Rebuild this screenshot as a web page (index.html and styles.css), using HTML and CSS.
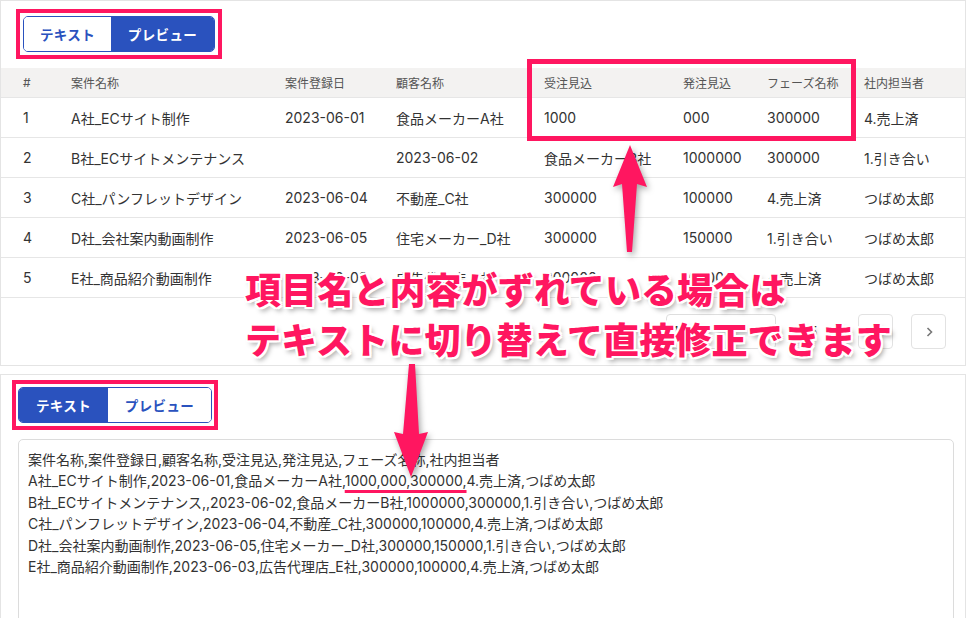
FILE: index.html
```html
<!DOCTYPE html>
<html lang="ja">
<head>
<meta charset="utf-8">
<title>CSV preview</title>
<link rel="stylesheet" href="styles.css">
</head>
<body>
<div class="page">
  <section class="panel top">
    <div class="hl">
      <div class="seg">
        <span class="seg-item">テキスト</span>
        <span class="seg-item on">プレビュー</span>
      </div>
    </div>
    <div class="grid">
      <div class="row head">
        <span>#</span><span>案件名称</span><span>案件登録日</span><span>顧客名称</span><span>受注見込</span><span>発注見込</span><span>フェーズ名称</span><span>社内担当者</span>
      </div>
      <div class="row">
        <span>1</span><span>A社_ECサイト制作</span><span>2023-06-01</span><span>食品メーカーA社</span><span>1000</span><span>000</span><span>300000</span><span>4.売上済</span>
      </div>
      <div class="row">
        <span>2</span><span>B社_ECサイトメンテナンス</span><span></span><span>2023-06-02</span><span>食品メーカーB社</span><span>1000000</span><span>300000</span><span>1.引き合い</span>
      </div>
      <div class="row">
        <span>3</span><span>C社_パンフレットデザイン</span><span>2023-06-04</span><span>不動産_C社</span><span>300000</span><span>100000</span><span>4.売上済</span><span>つばめ太郎</span>
      </div>
      <div class="row">
        <span>4</span><span>D社_会社案内動画制作</span><span>2023-06-05</span><span>住宅メーカー_D社</span><span>300000</span><span>150000</span><span>1.引き合い</span><span>つばめ太郎</span>
      </div>
      <div class="row">
        <span>5</span><span>E社_商品紹介動画制作</span><span>2023-06-03</span><span>広告代理店_E社</span><span>300000</span><span>100000</span><span>4.売上済</span><span>つばめ太郎</span>
      </div>
    </div>
    <div class="pager">
      <span class="pg-select">1</span>
      <span class="pg-text">/ 5</span>
      <span class="pg-btn"><svg width="10" height="12" viewBox="0 0 10 12"><polyline points="6.5,2 2.5,6 6.5,10" fill="none" stroke="#c8c8c8" stroke-width="1.6"/></svg></span>
      <span class="pg-btn"><svg width="10" height="12" viewBox="0 0 10 12"><polyline points="3.5,2 7.5,6 3.5,10" fill="none" stroke="#777" stroke-width="1.6"/></svg></span>
    </div>
  </section>

  <section class="panel bottom">
    <div class="hl hl2">
      <div class="seg seg2">
        <span class="seg-item on">テキスト</span>
        <span class="seg-item">プレビュー</span>
      </div>
    </div>
    <div class="editor">案件名称,案件登録日,顧客名称,受注見込,発注見込,フェーズ名称,社内担当者
A社_ECサイト制作,2023-06-01,食品メーカーA社,<span class="mark">1000,000,300000,</span>4.売上済,つばめ太郎
B社_ECサイトメンテナンス,,2023-06-02,食品メーカーB社,1000000,300000,1.引き合い,つばめ太郎
C社_パンフレットデザイン,2023-06-04,不動産_C社,300000,100000,4.売上済,つばめ太郎
D社_会社案内動画制作,2023-06-05,住宅メーカー_D社,300000,150000,1.引き合い,つばめ太郎
E社_商品紹介動画制作,2023-06-03,広告代理店_E社,300000,100000,4.売上済,つばめ太郎</div>
  </section>

  <div class="hl-box"></div>
  <svg class="arrows" width="969" height="618" viewBox="0 0 969 618">
    <polygon points="630,145 647,187 637,184 632,252 627,252 622,184 613,187" fill="#ff1660"/>
    <polygon points="409,364 415,364 419,434 428,432 411,477 394,432 403,434" fill="#ff1660"/>
  </svg>
  <div class="note">
    <div>項目名と内容がずれている場合は</div>
    <div>テキストに切り替えて直接修正できます</div>
  </div>
</div>
</body>
</html>
```
FILE: styles.css
```css
html, body {
  margin: 0;
  padding: 0;
  background: #ffffff;
}
body {
  font-family: Inter, "Noto Sans CJK JP", sans-serif;
  color: #333333;
  width: 969px;
  height: 618px;
  overflow: hidden;
}
.page {
  position: relative;
  width: 969px;
  height: 618px;
}
.panel {
  box-sizing: border-box;
  width: 966px;
  border: 1px solid #e4e4e4;
  background: #ffffff;
}
.top {
  padding-top: 8px;
}
.bottom {
  margin-top: 8px;
  padding: 5px 0 0 11px;
  height: 260px;
}
.hl {
  display: inline-flex;
  margin-left: 15px;
  border: 4px solid #ff1660;
  padding: 3px;
}
.hl2 {
  margin-left: 0;
  padding: 3px 2px;
}
.seg {
  display: flex;
  height: 36px;
  box-sizing: border-box;
  border: 1px solid #2a52be;
  border-radius: 5px;
  overflow: hidden;
}
.seg-item {
  display: flex;
  align-items: center;
  justify-content: center;
  width: 87px;
  font-size: 13.5px;
  font-weight: 700;
  letter-spacing: 0.4px;
  color: #2a52be;
  background: #ffffff;
}
.seg-item + .seg-item {
  width: 103px;
}
.seg2 .seg-item {
  width: 89px;
}
.seg2 .seg-item + .seg-item {
  width: 103px;
}
.seg-item.on {
  background: #2a52be;
  color: #ffffff;
}
.grid {
  margin-top: 9px;
}
.row {
  display: grid;
  grid-template-columns: 70px 214px 111px 148px 139px 84px 97px 1fr;
  align-items: center;
  height: 40px;
  box-sizing: border-box;
  border-bottom: 1px solid #e6e6e6;
  font-size: 14px;
  color: #333333;
  white-space: nowrap;
}
.row > span:first-child {
  padding-left: 22px;
}
.row.head {
  height: 30px;
  background: #f3f2f1;
  font-size: 12px;
  color: #555555;
}
.pager {
  display: flex;
  justify-content: flex-end;
  align-items: center;
  height: 67px;
  padding-right: 19px;
  font-size: 14px;
  color: #333333;
}
.pg-select {
  box-sizing: border-box;
  width: 110px;
  height: 35px;
  border: 1px solid #dedede;
  border-radius: 4px;
  display: flex;
  align-items: center;
  padding-left: 6px;
}
.pg-text {
  margin-left: 24px;
  width: 40px;
}
.pg-btn {
  box-sizing: border-box;
  width: 35px;
  height: 35px;
  border: 1px solid #e2e2e2;
  border-radius: 4px;
  display: flex;
  align-items: center;
  justify-content: center;
  margin-left: 18px;
}
.editor {
  margin-top: 9px;
  margin-left: 6px;
  box-sizing: border-box;
  width: 936px;
  height: 200px;
  border: 1px solid #dcdcdc;
  border-radius: 5px;
  padding: 9px 9px;
  font-size: 14px;
  line-height: 21.4px;
  color: #333333;
  white-space: pre;
}
.mark {
  text-decoration: underline;
  text-decoration-color: #ff1660;
  text-decoration-thickness: 3px;
  text-underline-offset: 4px;
}
.hl-box {
  position: absolute;
  left: 527px;
  top: 59px;
  width: 329px;
  height: 82px;
  box-sizing: border-box;
  border: 5px solid #ff1660;
}
.arrows {
  position: absolute;
  left: 0;
  top: 0;
  filter: drop-shadow(2px 3px 3px rgba(0, 0, 0, 0.35));
}
.note {
  position: absolute;
  left: 245px;
  top: 263px;
  font-family: "Noto Sans CJK JP", sans-serif;
  font-weight: 900;
  font-size: 36px;
  line-height: 50px;
  letter-spacing: 0.1px;
  color: #ff1660;
  white-space: nowrap;
  text-shadow:
    2px 0 0 #fff, -2px 0 0 #fff, 0 2px 0 #fff, 0 -2px 0 #fff,
    2px 2px 0 #fff, -2px -2px 0 #fff, 2px -2px 0 #fff, -2px 2px 0 #fff,
    3px 4px 5px rgba(0, 0, 0, 0.35);
}
```
